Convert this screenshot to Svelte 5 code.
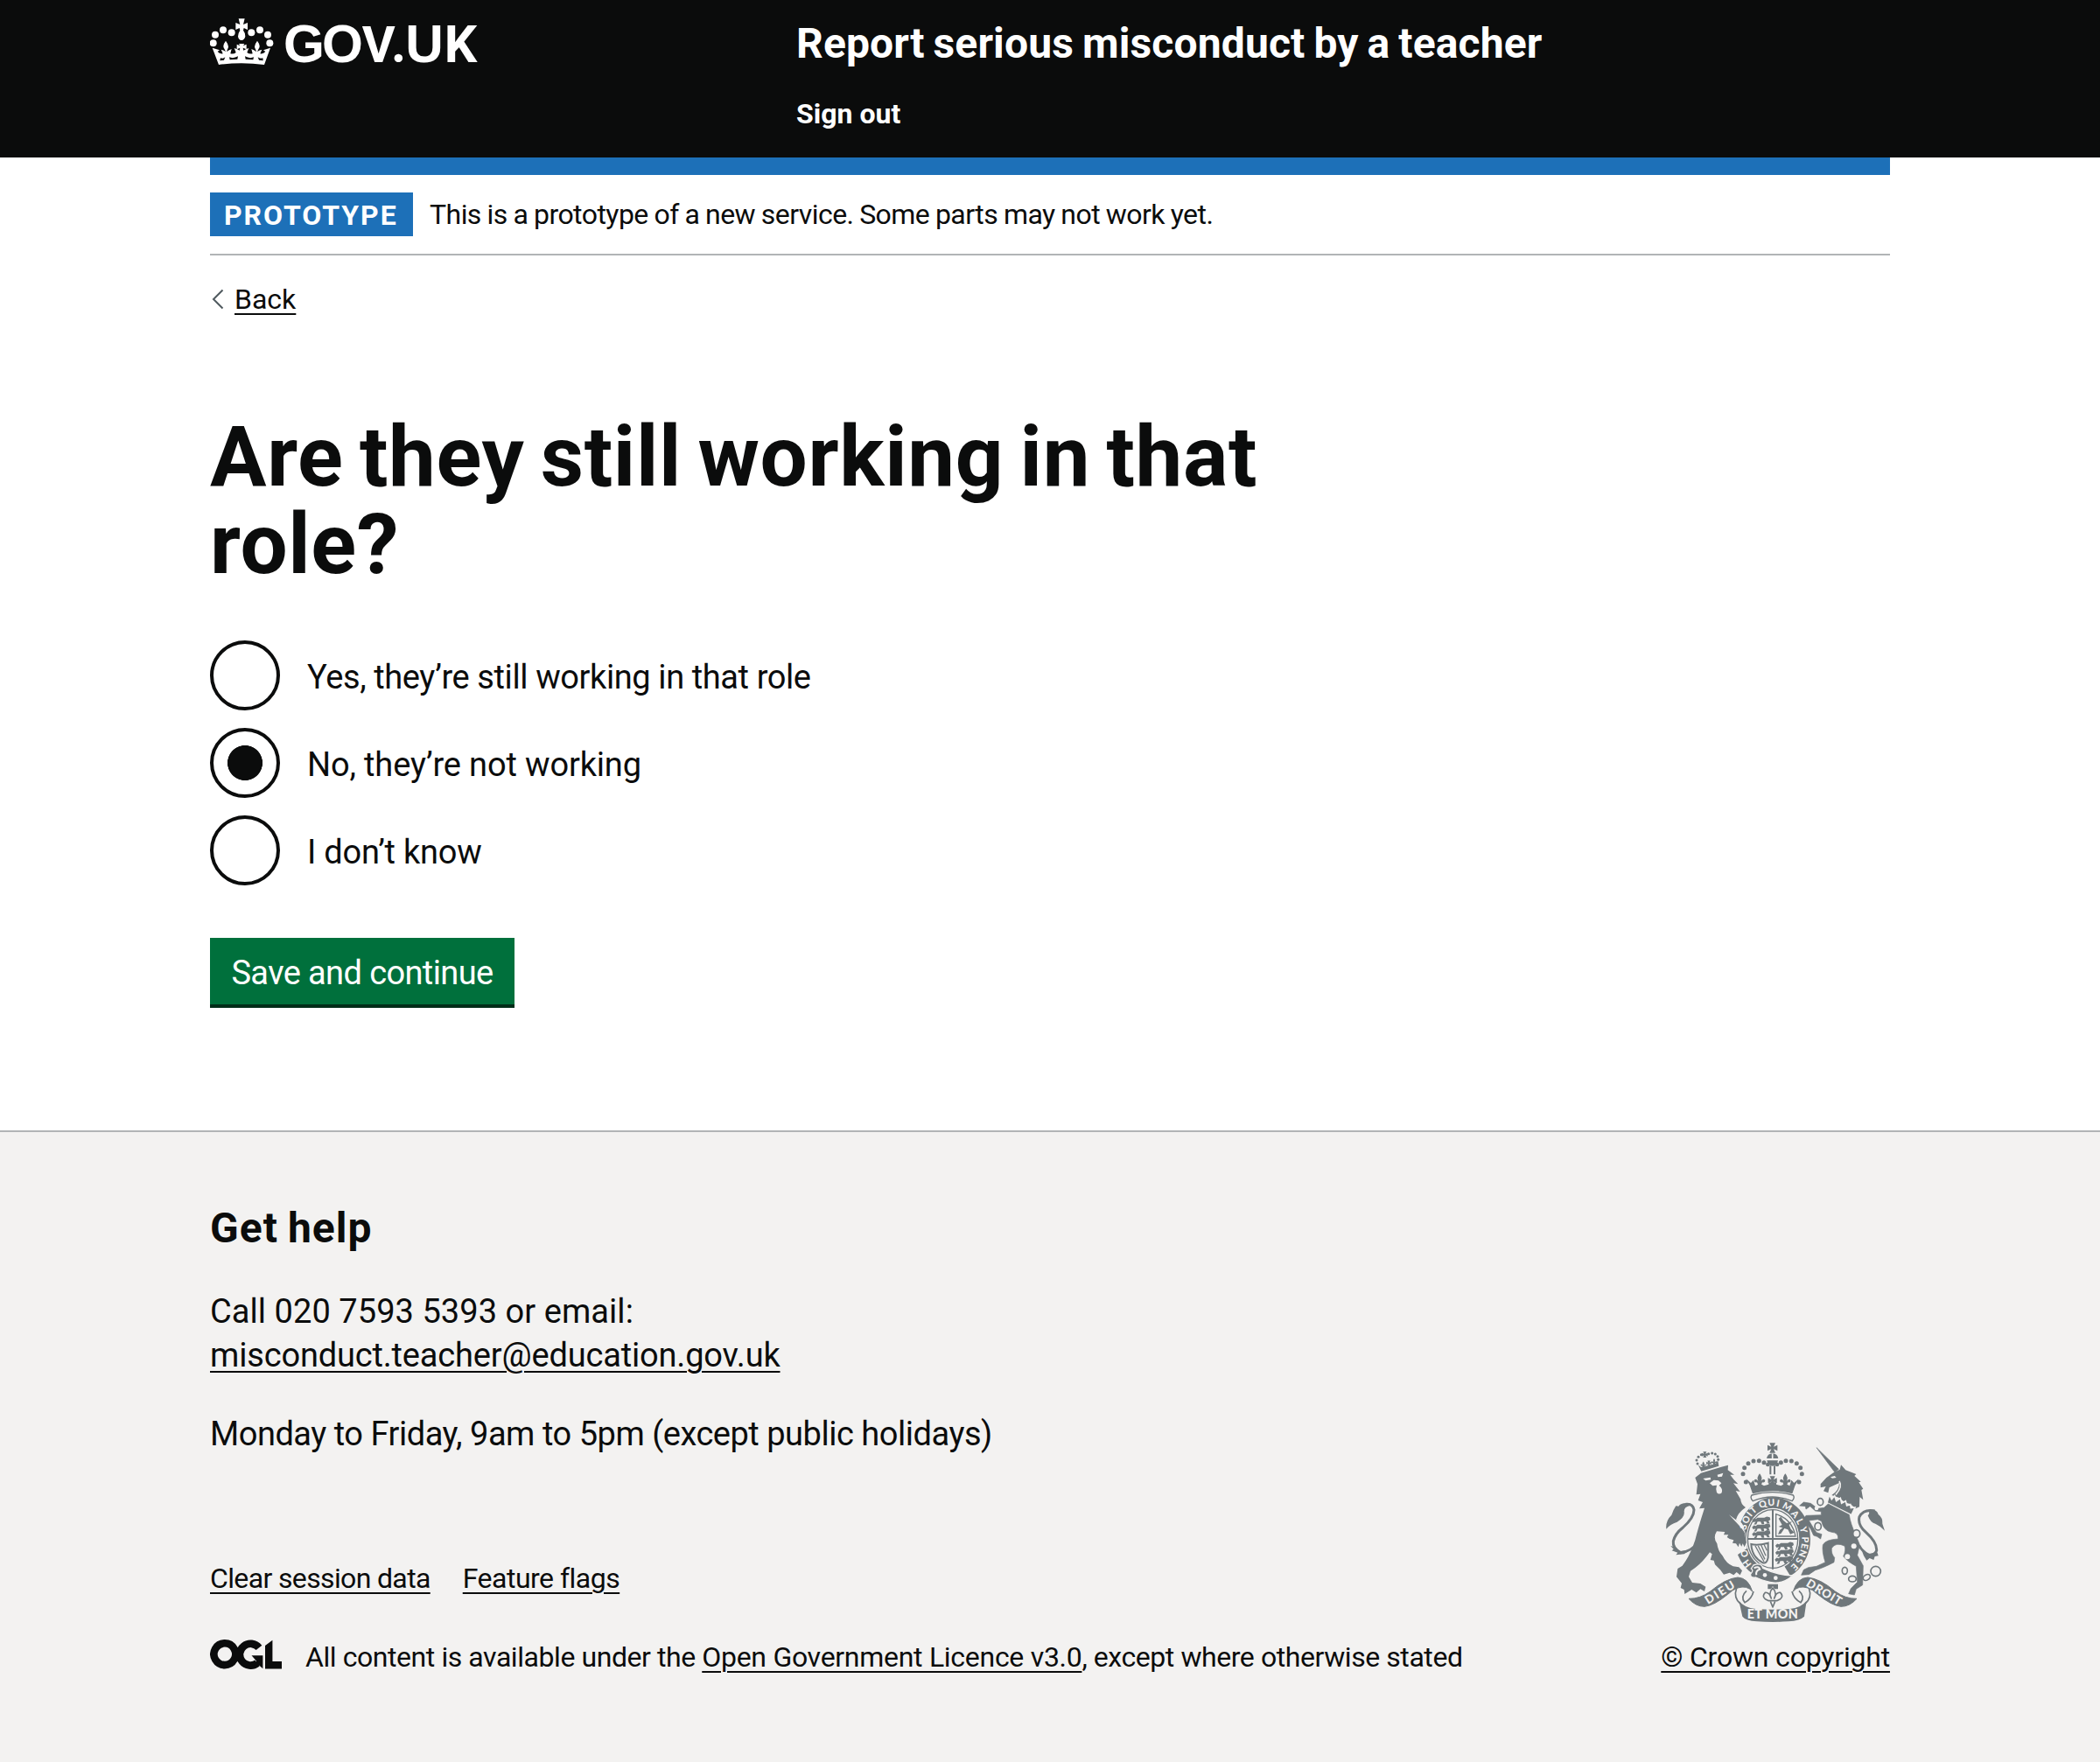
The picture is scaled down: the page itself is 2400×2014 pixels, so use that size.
<script>
  const options = [
    { id: 'yes', label: 'Yes, they’re still working in that role', fit: 'fit-yes' },
    { id: 'no', label: 'No, they’re not working', fit: 'fit-no' },
    { id: 'unknown', label: 'I don’t know', fit: 'fit-unknown' }
  ];
  let selected = $state('no');

  // Motto letters placed round the garter: letter, centre x, centre y
  const motto = [
    ['H', 350, 472], ['O', 341, 438], ['S', 338, 346], ['O', 347, 322], ['I', 358, 303], ['T', 371, 289],
    ['Q', 403, 269], ['U', 433, 263], ['I', 456, 266], ['M', 487, 278], ['A', 514, 303], ['L', 531, 328],
    ['Y', 543, 357], ['P', 549, 391], ['E', 547, 413], ['N', 541, 438], ['S', 529, 463], ['E', 513, 484]
  ].map(([ch, x, y]) => ({
    ch, x, y,
    rot: (Math.atan2((x - 438) / (108 * 108), (388 - y) / (124 * 124)) * 180) / Math.PI
  }));

  const beads = [[346, 193], [336, 165], [341, 144], [354, 129], [372, 121], [391, 120], [408, 126]];
  const lionBeads = [[180, 130], [177, 118], [183, 107], [193, 99], [218, 96], [230, 94], [241, 97], [249, 105], [251, 116]];
  const logoDots = [[41, 148], [48, 119], [75, 103], [104, 112]];
</script>

{#snippet crossPattee(x, y, s)}
  <path transform="translate({x} {y}) scale({s})" d="M-10-17H10L4-4 17-10V10L4 4 10 17H-10L-4 4-17 10V-10L-4-4Z" />
{/snippet}

{#snippet fleur(x, y, s)}
  <path transform="translate({x} {y}) scale({s})" d="M0-24Q13-9 5 5Q18-9 21 4Q20 13 10 10Q8 17 4 22H-4Q-8 17-10 10Q-20 13-21 4Q-18-9-5 5Q-13-9 0-24Z" />
{/snippet}

{#snippet passant(x, y)}
  <path transform="translate({x} {y}) scale(1.05 1.1)" d="M0 4L6-2 12 0 18-4H40L48-8 58-6 60 2 54 6 58 14H50L46 8 38 7 40 16H32L28 8 18 8 14 17H6L12 8 4 10Z" />
{/snippet}

<header class="header">
  <div class="container header-grid">
    <a class="logo" href="#home" aria-label="GOV.UK">
      <svg width="309" height="77" viewBox="30 27 927 231" fill="#fff">
        {#each logoDots as [x, y]}
          <circle cx={x} cy={y} r="12" />
          <circle cx={276 - x} cy={y} r="12" />
        {/each}
        <path d="M128 64H149L144 84 159 78V102L146 96 144 104Q152 114 151 125Q148 137 138 138Q128 137 126 125Q126 114 133 104L131 96 118 102V78L133 84Z" />
        <path d="M38 164L63 172L56 177Q63 186 74 184L68 170Q79 172 84 178L80 169Q70 158 84 140Q98 158 90 169L87 178Q93 172 104 168L100 184Q112 186 119 180L113 165Q125 168 131 173L133 164L122 169V152L133 157L129 150H148L144 157L155 152V169L143 164L145 173Q152 168 163 165L157 180Q164 186 176 184L172 168Q183 172 189 178L186 169Q178 158 192 140Q206 158 196 169L192 178Q197 172 208 170L202 184Q213 186 220 177L213 172L237 164L216 222Q138 212 60 222Z" />
        <g fill="#0b0c0c">
          <path d="M66 199Q75 203 82 196L78 206 64 208ZM96 196Q110 202 126 193L124 203 98 205ZM150 193Q166 202 180 196L178 205 152 203ZM194 196Q202 203 211 199L212 208 198 206Z" />
        </g>
        <text class="wordmark" y="213"><tspan x="282">G</tspan><tspan x="414">O</tspan><tspan class="narrow vee" x="551">V</tspan><tspan class="dot" x="654">.</tspan><tspan x="700">U</tspan><tspan class="narrow" x="833">K</tspan></text>
      </svg>
    </a>
    <div class="header-content">
      <a class="service" href="#service">Report serious misconduct by a teacher</a>
      <a class="signout" href="#signout">Sign out</a>
    </div>
  </div>
</header>

<div class="container">
  <div class="bar"></div>
  <div class="phase">
    <strong class="tag">Prototype</strong>
    <span class="phase-text">This is a prototype of a new service. Some parts may not work yet.</span>
  </div>
  <a class="back" href="#back">
    <svg width="14" height="24" viewBox="0 0 14 24" fill="none" stroke="#505a5f" stroke-width="2"><path d="M12.5 1.5L2 12L12.5 22.5" /></svg>
    <span>Back</span>
  </a>
  <main>
    <h1>Are they still working in that role?</h1>
    <div class="radios">
      {#each options as o (o.id)}
        <label class="radio">
          <input type="radio" name="working" value={o.id} bind:group={selected} />
          <span class={o.fit}>{o.label}</span>
        </label>
      {/each}
    </div>
    <button class="button" type="button">Save and continue</button>
  </main>
</div>

<footer class="footer">
  <div class="container footer-grid">
    <div class="footer-main">
      <h2>Get help</h2>
      <p class="contact"><span class="call">Call 020 7593 5393 or email:</span><br /><a class="email" href="#email">misconduct.teacher@education.gov.uk</a></p>
      <p class="hours">Monday to Friday, 9am to 5pm (except public holidays)</p>
      <nav class="links">
        <a class="clear" href="#clear">Clear session data</a>
        <a class="flags" href="#flags">Feature flags</a>
      </nav>
      <div class="licence">
        <svg width="82" height="34" viewBox="0 0 82 34" fill="#0b0c0c" aria-label="OGL">
          <path d="M16.8 4.3A12.4 12.4 0 1 0 16.9 4.3ZM56 9.4A12.4 12.4 0 1 0 54 27" fill="none" stroke="#0b0c0c" stroke-width="8.6" />
          <path d="M47.5 18.2H60.4V33.2L56.4 29.8 50 30 53 24.5ZM63 7L71.4.8V25H82V33.4H63Z" />
        </svg>
        <span class="lic">All content is available under the <a class="lic-link" href="#ogl">Open Government Licence v3.0</a>, except where otherwise stated</span>
      </div>
    </div>
    <a class="copyright" href="#copyright">
      <svg width="250" height="205" viewBox="72 58 750 615" fill="#6f777b">
        <!-- Central crown -->
        {@render crossPattee(437, 76, 1)}
        <path d="M417 112Q420 96 437 95Q454 96 457 112Z" />
        <path d="M418 119H456Q453 137 437 138Q421 137 418 119Z" />
        <path d="M437 95V112" stroke="#f3f2f1" stroke-width="5" />
        {#each beads as [x, y]}
          <circle cx={x} cy={y} r="7.5" />
          <circle cx={874 - x} cy={y} r="7.5" />
        {/each}
        <circle cx="421" cy="133" r="7" />
        <circle cx="453" cy="133" r="7" />
        <path d="M427 137H433V167H427ZM441 137H447V167H441Z" />
        {@render crossPattee(437, 188, 0.9)}
        {@render fleur(393, 185, 0.9)}
        {@render fleur(481, 185, 0.9)}
        <path d="M347 182L363 196 372 186 378 206Q386 203 390 200H397L408 206 424 201V194H450V201L466 206 477 200H484L496 206 502 186 511 196 527 182Q512 205 505 233Q437 214 369 233Q362 205 347 182Z" />
        <path d="M366 238Q437 218 508 238Q515 248 504 258Q437 230 370 258Q359 248 366 238Z" fill="#f3f2f1" stroke="#6f777b" stroke-width="4" />

        <!-- Lion -->
        <g>
          {#each lionBeads as [x, y]}
            <circle cx={x} cy={y} r="4.5" />
          {/each}
          {@render crossPattee(205, 99, 0.6)}
          {@render crossPattee(219, 128, 0.5)}
          {@render fleur(200, 133, 0.45)}
          {@render fleur(237, 123, 0.45)}
          <path d="M182 134L192 142 220 136 243 129 250 118 253 138 193 156Z" />
        </g>
        <path d="M172 178L192 162 262 141 285 135 284 152 306 168 292 168 304 184 319 200 303 197 326 226 311 223 328 252Q328 268 345 280Q318 298 312 322L340 358 348 400 341 416 335 404 331 414 324 402 320 416 312 404 300 402 304 392 290 388 281 382 286 374 270 374 274 364 246 362Q232 384 247 404Q250 430 266 446Q278 472 302 482L322 485 333 497 326 512 314 502 304 512 290 504 270 510 258 494 240 476 236 462 224 460 230 440 222 434Q190 478 156 498L150 518 162 538 190 541 208 552 204 568 190 560 176 572 160 562 136 577 134 562 122 556 126 540 108 518 112 490 128 480Q158 440 172 392Q182 350 204 282L186 284 198 262 182 256 190 234 176 236 180 200Z" />
        <g fill="#f3f2f1">
          <path d="M199 181L224 177 226 185 208 188ZM248 168L268 162 264 174 250 176Z" />
          <path d="M222 197L236 186 252 188 262 197 254 205Q268 216 263 230Q254 238 246 229Q242 214 246 204L232 206Z" />
          <path d="M288 305L330 336 344 370 330 350Z" />
        </g>
        <path d="M188 395Q158 432 122 435Q94 420 97 396Q103 370 130 349Q168 315 168 288Q164 266 140 269" fill="none" stroke="#6f777b" stroke-width="9" />
        <path d="M154 266Q124 262 115 276L106 275Q96 290 91 306Q70 326 73 354Q86 337 110 330Q138 312 134 294Q134 278 154 274Z" />
        <path d="M88 412L102 416 120 430 154 426 134 440 106 443 112 435 92 428 98 423Z" />

        <!-- Unicorn -->
        <path d="M588 75L664 149 651 160Z" stroke="#6f777b" stroke-width="2" />
        <path d="M646 161L668 150 672 134 688 152 724 166 718 172 740 192 733 194 748 216 742 220 748 254 736 244 735 278 722 284 704 268 688 264 664 246 640 238Q666 222 666 196L632 212 628 230 612 224 620 208 602 212V200L622 178Z" />
        <path d="M636 176L650 172 656 178 642 180Z" fill="#f3f2f1" />
        <path d="M666 190Q678 210 654 236" fill="none" stroke="#f3f2f1" stroke-width="5" />
        <path d="M632 236L640 252 650 240 656 258 670 248 674 266 688 258 692 274 704 270 706 282 720 280 708 306 624 264Z" stroke="#f3f2f1" stroke-width="5" />
        <path d="M628 268L700 305Q704 336 724 378L736 408 728 444 748 480 746 546 724 560 718 580 698 576 706 558 728 536 724 482Q694 466 680 448Q690 426 684 412Q654 398 640 420Q638 440 650 452L648 468Q610 488 584 495L562 510 536 512 544 494 560 486 588 482 618 468Q606 430 610 408Q620 390 662 388Q664 366 640 365Q612 360 605 327L592 321 562 325 576 348 588 366 606 372 602 388 590 380 578 376 568 354 542 320 552 308 604 306 604 294 584 292 566 276 552 286 550 276 530 274 544 262 568 266 592 284 614 281Z" stroke="#6f777b" stroke-width="2" />
        <g fill="#f3f2f1">
          <circle cx="588" cy="283" r="7" /><circle cx="716" cy="413" r="9" /><circle cx="694" cy="449" r="9" />
        </g>
        <g fill="none" stroke="#6f777b" stroke-width="5">
          <ellipse cx="601" cy="261" rx="10" ry="12" />
          <ellipse cx="593" cy="345" rx="11" ry="13" fill="#f3f2f1" />
          <ellipse cx="725" cy="370" rx="12" ry="13" fill="#f3f2f1" />
          <ellipse cx="685" cy="497" rx="9" ry="12" />
          <ellipse cx="711" cy="525" rx="13" ry="10" />
          <ellipse cx="760" cy="520" rx="13" ry="9" transform="rotate(-30 760 520)" />
          <circle cx="791" cy="499" r="17" />
        </g>
        <path d="M788 292Q750 284 735 312Q728 340 758 366Q796 400 794 428Q786 446 766 442Q744 430 734 410" fill="none" stroke="#6f777b" stroke-width="9" />
        <path d="M766 288Q796 284 800 304Q816 316 814 336L822 360Q808 344 790 336Q774 334 764 308Q772 300 766 288Z" />
        <path d="M744 430L768 440 796 434 800 446 788 448 784 460 770 454 760 462 750 446Z" />

        <!-- Garter -->
        <path fill-rule="evenodd" d="M438 245A129 143 0 0 1 567 388A129 143 0 0 1 498 515L478 482A90 105 0 1 0 392 478L370 508A129 143 0 0 1 318 442L350 420Q344 340 328 330A129 143 0 0 1 438 245Z" />
        <ellipse cx="438" cy="388" rx="91" ry="106" fill="#f3f2f1" />
        <ellipse cx="438" cy="388" rx="86" ry="100" fill="none" stroke="#6f777b" stroke-width="4" />
        <path d="M438 288V492M352 388H524" stroke="#6f777b" stroke-width="6" />
        {@render passant(367, 320)}
        {@render passant(367, 344)}
        {@render passant(367, 367)}
        {@render passant(447, 407)}
        {@render passant(447, 431)}
        {@render passant(445, 455)}
        <path d="M449 303Q505 320 516 379H449Z" fill="none" stroke="#6f777b" stroke-width="4" />
        <path d="M458 318L466 312 474 324 486 334 504 328 494 340 500 354 512 366 498 372 490 356 478 352 466 370 456 372 462 358 472 350 458 346 470 340Z" />
        <path d="M364 406Q386 412 422 402V452Q418 474 404 470Q366 450 364 406Z" fill="none" stroke="#6f777b" stroke-width="6" />
        <path d="M378 412L408 466M388 412L411 458M398 409L414 446M408 407L418 428" stroke="#6f777b" stroke-width="4" />
        <g class="motto">
          {#each motto as m}
            <text text-anchor="middle" transform="translate({m.x} {m.y}) rotate({m.rot})" y="11">{m.ch}</text>
          {/each}
        </g>

        <!-- Buckle and strap -->
        <path d="M372 478Q400 468 404 488Q450 512 506 514Q470 546 428 536Q396 528 380 520Q360 524 362 508Q374 496 364 490Z" stroke="#f3f2f1" stroke-width="4" />
        <path d="M374 488Q390 480 394 492Q378 496 382 512" fill="none" stroke="#f3f2f1" stroke-width="6" />
        <circle cx="411" cy="512" r="7" fill="#f3f2f1" />
        <circle cx="448" cy="522" r="7" fill="#f3f2f1" />
        <path d="M421 543H456V560H444L438 550 432 560H421Z" />
        <g fill="none" stroke="#6f777b" stroke-width="5" stroke-linejoin="round">
          <path d="M438 556Q454 574 443 592Q450 570 464 572Q476 584 464 594L452 600H424L412 594Q400 584 412 572Q426 570 433 592Q422 574 438 556Z" />
          <path d="M430 602L438 622 446 602" />
        </g>

        <!-- Ribbons -->
        <g stroke="#6f777b" stroke-width="3" stroke-linejoin="round">
          <path d="M150 593Q188 594 224 568Q276 524 318 520Q354 522 368 568Q350 546 318 556Q300 562 284 578Q236 617 204 620Q174 620 150 593Z" />
          <path d="M726 593Q688 594 652 568Q600 524 558 520Q522 522 508 568Q526 546 558 556Q576 562 592 578Q640 617 672 620Q702 620 726 593Z" />
        </g>
        <g fill="none" stroke="#6f777b" stroke-width="5">
          <path d="M314 557Q302 590 328 612M372 568Q366 594 342 606Q326 586 348 566" />
          <path d="M562 557Q574 590 548 612M504 568Q510 594 534 606Q550 586 528 566" />
        </g>
        <path d="M322 600Q340 624 380 628Q438 632 496 628Q536 624 554 600L546 654Q532 668 492 671Q438 675 384 671Q344 668 334 654Z" />
        <g class="ribbon-text" fill="#f3f2f1">
          <text x="216" y="613" transform="rotate(-32 216 613)" textLength="112">DIEU</text>
          <text class="wide" x="350" y="662" textLength="174">ET MON</text>
          <text x="550" y="548" transform="rotate(31 550 548)" textLength="133">DROIT</text>
        </g>
      </svg>
      <span>© Crown copyright</span>
    </a>
  </div>
</footer>

<style>
  :global(body) {
    margin: 0;
    background: #fff;
    color: #0b0c0c;
    font-family: Roboto, 'Noto Sans', sans-serif;
  }
  :global(#app) {
    display: flex;
    flex-direction: column;
    min-height: 2014px;
  }
  a { color: inherit; text-decoration: none; }
  .container { width: 1920px; margin: 0 auto; }

  .header { height: 180px; background: #0b0c0c; color: #fff; }
  .header-grid { display: grid; grid-template-columns: 670px 1fr; }
  .logo { padding-top: 9px; }
  .logo svg { display: block; }
  .wordmark { font: 700 181px 'Liberation Sans', sans-serif; }
  .wordmark .narrow { font-family: Roboto, sans-serif; font-size: 177px; }
  .wordmark .vee { font-size: 174px; }
  .wordmark .dot { font-family: Lato, sans-serif; font-size: 186px; }
  .header-content { display: flex; flex-direction: column; align-items: flex-start; padding-top: 25px; }
  .service { font-size: 48px; font-weight: 700; line-height: 50px; letter-spacing: 0.003em; word-spacing: -0.045em; }
  .signout { margin-top: 35px; font-size: 32px; font-weight: 700; line-height: 40px; letter-spacing: 0.001em; }

  .bar { height: 20px; background: #1d70b8; }
  .phase { display: flex; height: 50px; padding: 20px 0; border-bottom: 2px solid #b1b4b6; font-size: 32px; line-height: 50px; }
  .tag {
    box-sizing: border-box;
    width: 232px;
    margin-right: 19px;
    padding: 1px 0 0 16px;
    background: #1d70b8;
    color: #fff;
    letter-spacing: 0.061em;
    text-transform: uppercase;
  }
  .phase-text { letter-spacing: -0.017em; word-spacing: -0.022em; }
  .back { display: flex; align-items: center; width: max-content; margin-top: 30px; padding-left: 2px; line-height: 40px; font-size: 32px; }
  .back svg { margin-right: 12px; }

  .back span, .email, .clear, .flags, .lic-link, .copyright span {
    text-decoration: underline;
    text-decoration-thickness: 2px;
    text-underline-offset: 5px;
  }

  main { display: flex; flex-direction: column; align-items: flex-start; padding: 110px 0 140px; }
  h1 { width: 1280px; margin: 0; font-size: 96px; line-height: 100px; letter-spacing: 0.007em; word-spacing: -0.065em; }
  .radios { display: flex; flex-direction: column; gap: 20px; margin: 60px 0; }
  .radio { display: flex; gap: 31px; height: 80px; font-size: 38px; line-height: 84px; }
  .radio input {
    appearance: none;
    box-sizing: border-box;
    width: 80px;
    height: 80px;
    margin: 0;
    border: 4px solid #0b0c0c;
    border-radius: 50%;
  }
  .radio input:checked { background: radial-gradient(circle, #0b0c0c 19.7px, transparent 20.3px); }
  .fit-yes { letter-spacing: -0.0105em; }
  .fit-no { letter-spacing: -0.004em; }
  .fit-unknown { letter-spacing: -0.006em; }
  .button {
    width: 348px;
    height: 76px;
    margin-bottom: 4px;
    padding: 4px 0 0;
    border: 0;
    background: #00703c;
    box-shadow: 0 4px 0 #002d18;
    color: #fff;
    font: 38px Roboto, sans-serif;
    letter-spacing: -0.016em;
    white-space: nowrap;
  }

  .footer { flex: 1; border-top: 2px solid #b1b4b6; background: #f3f2f1; }
  .footer-grid { display: flex; justify-content: space-between; align-items: flex-end; padding-top: 85px; }
  h2 { margin: 0 0 45px; font-size: 48px; line-height: 50px; letter-spacing: 0.021em; word-spacing: -0.04em; }
  p { margin: 0; font-size: 38px; line-height: 50px; }
  .call { letter-spacing: 0.0015em; }
  .email { letter-spacing: -0.0045em; }
  .hours { margin-top: 40px; letter-spacing: -0.0125em; }
  .links { display: flex; gap: 37px; margin: 120px 0 50px; font-size: 32px; line-height: 40px; }
  .clear { letter-spacing: -0.02em; }
  .flags { letter-spacing: -0.016em; }
  .licence { display: flex; gap: 27px; font-size: 32px; line-height: 40px; }
  .lic { letter-spacing: -0.0135em; }
  .lic-link { letter-spacing: -0.009em; }
  .copyright { display: flex; flex-direction: column; align-items: center; gap: 20px; font-size: 32px; line-height: 40px; letter-spacing: -0.006em; }
  .motto { fill: #f3f2f1; font: 900 32px Lato, sans-serif; }
  .ribbon-text { font: 900 40px Lato, sans-serif; }
  .ribbon-text .wide { font-size: 43px; }
</style>
